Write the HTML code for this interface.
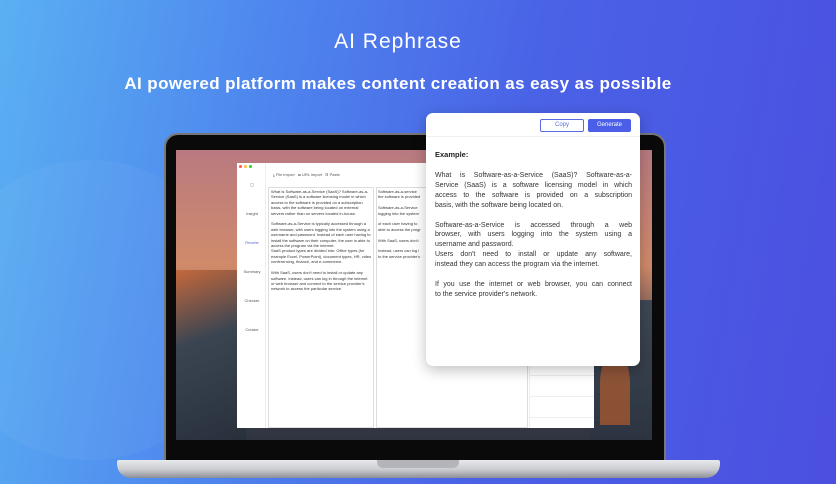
<!DOCTYPE html>
<html><head><meta charset="utf-8"><style>
*{margin:0;padding:0;box-sizing:border-box}
body{width:836px;height:484px;overflow:hidden;position:relative;font-family:"Liberation Sans",sans-serif;background:linear-gradient(100deg,#5ab0f2 0%,#4e86ee 30%,#4a62e6 60%,#4b4fe0 100%)}
.c{position:absolute}
h1{position:absolute;top:30px;left:0;width:796px;text-align:center;color:#fff;font-size:21px;font-weight:normal;letter-spacing:1px}
h2{position:absolute;top:74px;left:0;width:796px;text-align:center;color:#fff;font-size:17px;font-weight:bold;letter-spacing:0.4px}
.t{font-size:4px;line-height:5.4px;color:#333}
.p div{text-align:justify;text-align-last:justify;white-space:nowrap;height:9.9px}
.p div.l{text-align-last:left}
.p div.g{height:10px}
</style></head><body>
<div class="c" style="left:-60px;top:160px;width:300px;height:300px;border-radius:50%;background:rgba(255,255,255,0.04)"></div>
<h1>AI Rephrase</h1>
<h2>AI powered platform makes content creation as easy as possible</h2>
<div class="c" style="left:164px;top:133px;width:502px;height:330px;background:#0a0a0a;border-radius:14px 14px 0 0;border:2px solid #777"></div>
<div class="c" style="left:176px;top:150px;width:476px;height:290px;background:linear-gradient(180deg,#b87a80 0%,#d08a6a 40%,#5a4d55 65%,#2e3440 100%)"></div>
<div class="c" style="left:176px;top:270px;width:70px;height:170px;background:linear-gradient(160deg,#c4683c 0%,#3b4552 40%,#28303c 100%)"></div>
<div class="c" style="left:590px;top:300px;width:62px;height:140px;background:linear-gradient(180deg,#3f4856,#2c3441)"></div>
<div class="c" style="left:600px;top:355px;width:30px;height:70px;background:#c8622a;opacity:.6;border-radius:40% 40% 0 0"></div>
<div class="c" style="left:237px;top:163px;width:357px;height:265px;background:#fff"></div>
<div class="c" style="left:239px;top:165px;width:3px;height:3px;border-radius:50%;background:#f55"></div>
<div class="c" style="left:244px;top:165px;width:3px;height:3px;border-radius:50%;background:#fb3"></div>
<div class="c" style="left:249px;top:165px;width:3px;height:3px;border-radius:50%;background:#3c3"></div>
<div class="c t" style="left:240px;top:170px;width:24px;text-align:center;color:#555;line-height:29px">▢<br>Insight<br><span style="color:#5a6be0">Rewrite</span><br>Summary<br>Checker<br>Creator</div>
<div class="c" style="left:265px;top:163px;width:1px;height:265px;background:#eee"></div>
<div class="c t" style="left:273px;top:172px;color:#555">⤓ File import &nbsp; ▭ URL import &nbsp; ▯ Paste</div>
<div class="c" style="left:268px;top:187px;width:106px;height:241px;border:1px solid #ddd"></div>
<div class="c" style="left:376px;top:187px;width:152px;height:241px;border:1px solid #ddd"></div>
<div class="c" style="left:529px;top:187px;width:65px;height:241px;border-left:1px solid #eee;background:repeating-linear-gradient(180deg,#fff 0 20px,#eee 20px 21px)"></div>
<div class="c t" style="left:271px;top:189px;width:101px">What is Software-as-a-Service (SaaS)? Software-as-a-Service (SaaS) is a software licensing model in which access to the software is provided on a subscription basis, with the software being located on external servers rather than on servers located in-house.<br><br>Software-as-a-Service is typically accessed through a web browser, with users logging into the system using a username and password. Instead of each user having to install the software on their computer, the user is able to access the program via the internet.<br>SaaS product types are divided into: Office types (for example Excel, PowerPoint), document types, HR, video conferencing, finance, and e-commerce.<br><br>With SaaS, users don't need to install or update any software. Instead, users can log in through the internet or web browser and connect to the service provider's network to access the particular service.</div>
<div class="c t" style="left:378px;top:189px;width:50px;overflow:hidden;white-space:nowrap">Software-as-a-service<br>the software is provided<br><br>Software-as-a-Service<br>logging into the system<br><br>of each user having to<br>able to access the progr<br><br>With SaaS, users don't<br><br>Instead, users can log i<br>to the service provider's</div>
<div class="c" style="left:117px;top:460px;width:603px;height:18px;background:linear-gradient(180deg,#e8e9ec 0%,#c9cacf 55%,#8d8f96 100%);border-radius:2px 2px 14px 14px"></div>
<div class="c" style="left:377px;top:460px;width:82px;height:8px;background:#b3b5bb;border-radius:0 0 6px 6px"></div>
<div class="c" style="left:426px;top:113px;width:214px;height:253px;background:#fff;border-radius:7px;box-shadow:0 4px 14px rgba(0,0,0,.25)"></div>
<div class="c" style="left:426px;top:136px;width:214px;height:1px;background:#f0f0f0"></div>
<div class="c" style="left:540px;top:119px;width:44px;height:13px;border:1px solid #5a6be0;border-radius:2px;font-size:6px;color:#5a6be0;text-align:center;line-height:11px">Copy</div>
<div class="c" style="left:588px;top:119px;width:43px;height:13px;background:#4a5ee8;border-radius:2px;font-size:6px;color:#fff;text-align:center;line-height:13px">Generate</div>
<div class="c" style="left:435px;top:150px;font-size:7.5px;color:#222;font-weight:bold">Example:</div>
<div class="c p" style="left:435px;top:171px;width:197px;font-size:7px;line-height:9.9px;color:#333">
<div>What is Software-as-a-Service (SaaS)? Software-as-a-</div>
<div>Service (SaaS) is a software licensing model in which</div>
<div>access to the software is provided on a subscription</div>
<div class="l">basis, with the software being located on.</div>
<div class="g"></div>
<div>Software-as-a-Service is accessed through a web</div>
<div>browser, with users logging into the system using a</div>
<div class="l">username and password.</div>
<div>Users don't need to install or update any software,</div>
<div class="l">instead they can access the program via the internet.</div>
<div class="g"></div>
<div>If you use the internet or web browser, you can connect</div>
<div class="l">to the service provider's network.</div>
</div>
</body></html>
